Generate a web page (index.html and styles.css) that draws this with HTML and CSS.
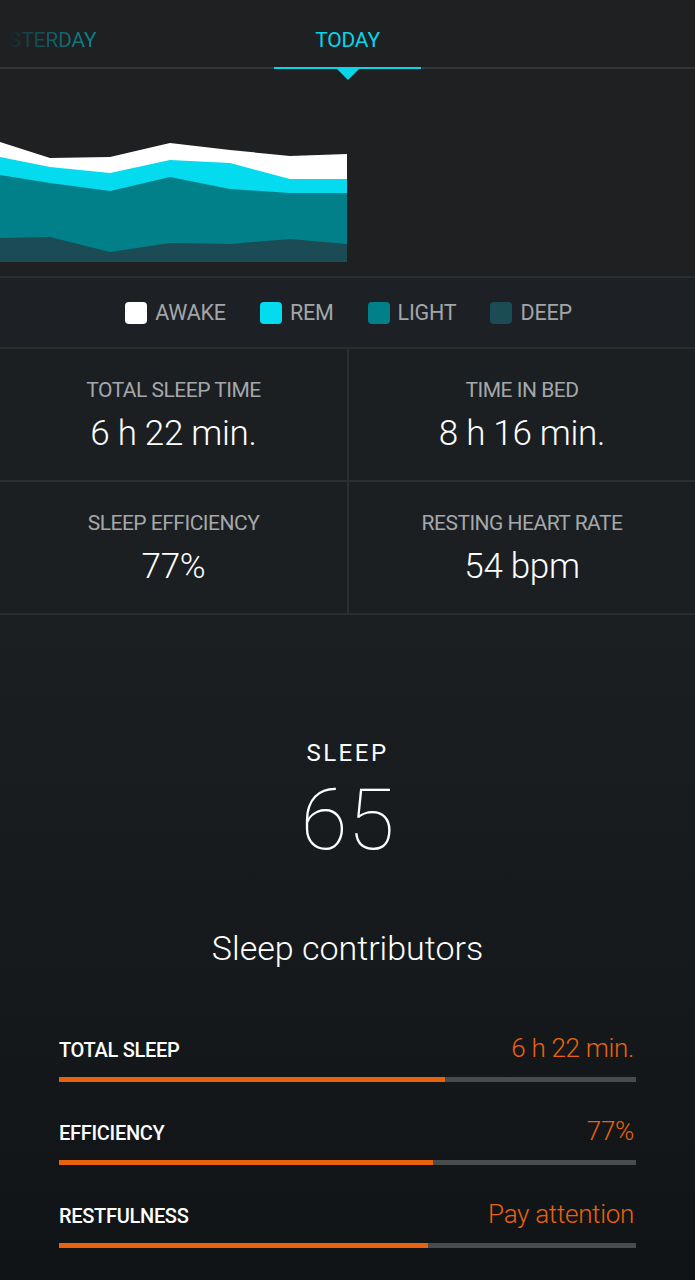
FILE: index.html
```html
<!DOCTYPE html>
<html>
<head>
<meta charset="utf-8">
<link rel="stylesheet" href="styles.css">
</head>
<body>
<div class="app">
  <header class="tabs">
    <div class="tab tab-prev">YESTERDAY</div>
    <div class="tab tab-active"><span class="tab-label">TODAY</span></div>
    <div class="tab"></div>
  </header>

  <section class="chart">
    <svg class="chart-svg" width="347" height="122" viewBox="0 0 347 122">
      <polygon fill="#ffffff" points="0,2 50,18 110,17 170,3 230,10 290,16 347,14 347,122 0,122"/>
      <polygon fill="#04dbef" points="0,17 50,27 110,33 170,20 230,23 290,39 347,39 347,122 0,122"/>
      <polygon fill="#02808a" points="0,35 50,43 110,51 170,37 230,49 290,53 347,53 347,122 0,122"/>
      <polygon fill="#1b4b55" points="0,98 50,97 110,112 170,103 230,104 290,99 347,104 347,122 0,122"/>
    </svg>
  </section>

  <section class="legend">
    <div class="legend-item"><span class="swatch swatch-awake"></span>AWAKE</div>
    <div class="legend-item"><span class="swatch swatch-rem"></span>REM</div>
    <div class="legend-item"><span class="swatch swatch-light"></span>LIGHT</div>
    <div class="legend-item"><span class="swatch swatch-deep"></span>DEEP</div>
  </section>

  <section class="stats">
    <div class="stat">
      <div class="stat-label">TOTAL SLEEP TIME</div>
      <div class="stat-value">6 h 22 min.</div>
    </div>
    <div class="stat">
      <div class="stat-label">TIME IN BED</div>
      <div class="stat-value">8 h 16 min.</div>
    </div>
    <div class="stat">
      <div class="stat-label">SLEEP EFFICIENCY</div>
      <div class="stat-value">77%</div>
    </div>
    <div class="stat">
      <div class="stat-label">RESTING HEART RATE</div>
      <div class="stat-value">54 bpm</div>
    </div>
  </section>

  <section class="score">
    <div class="score-title">SLEEP</div>
    <div class="score-value">65</div>
    <h2 class="contrib-title">Sleep contributors</h2>
    <div class="contribs">
      <div class="contrib">
        <div class="contrib-head"><span class="contrib-label">TOTAL SLEEP</span><span class="contrib-value">6 h 22 min.</span></div>
        <div class="bar"><div class="bar-fill" style="width:66.9%"></div></div>
      </div>
      <div class="contrib">
        <div class="contrib-head"><span class="contrib-label">EFFICIENCY</span><span class="contrib-value">77%</span></div>
        <div class="bar"><div class="bar-fill" style="width:64.9%"></div></div>
      </div>
      <div class="contrib">
        <div class="contrib-head"><span class="contrib-label">RESTFULNESS</span><span class="contrib-value">Pay attention</span></div>
        <div class="bar"><div class="bar-fill" style="width:64%"></div></div>
      </div>
    </div>
  </section>
</div>
</body>
</html>
```

FILE: styles.css
```css
* { box-sizing: border-box; }

html, body {
  margin: 0;
  padding: 0;
  background: #1f2022;
}

body {
  width: 695px;
  height: 1280px;
  overflow: hidden;
  font-family: Roboto, "Noto Sans", sans-serif;
  color: #ffffff;
}

.app {
  display: flex;
  flex-direction: column;
  height: 1280px;
}

/* Tabs */
.tabs {
  height: 69px;
  display: flex;
  justify-content: center;
  gap: 160px;
  border-bottom: 2px solid #343537;
  background: #1f2022;
  flex-shrink: 0;
}

.tab {
  width: 147px;
  flex-shrink: 0;
  text-align: center;
  font-size: 21px;
  line-height: 24px;
  padding-top: 28px;
  letter-spacing: -0.2px;
  position: relative;
  white-space: nowrap;
}

.tab-prev {
  color: #0e7f89;
  -webkit-mask-image: linear-gradient(to right, rgba(0,0,0,0) 28%, rgba(0,0,0,0.35) 40%, #000 80%);
  mask-image: linear-gradient(to right, rgba(0,0,0,0) 28%, rgba(0,0,0,0.35) 40%, #000 80%);
}

.tab-active {
  color: #07d6ea;
}

.tab-active::after {
  content: "";
  position: absolute;
  left: 0;
  right: 0;
  bottom: -2px;
  height: 2px;
  background: #07d6ea;
}

.tab-active::before {
  content: "";
  position: absolute;
  left: 50%;
  bottom: -13px;
  margin-left: -11px;
  border-left: 11px solid transparent;
  border-right: 11px solid transparent;
  border-top: 11px solid #07d6ea;
}

/* Chart */
.chart {
  height: 207px;
  flex-shrink: 0;
  padding-top: 71px;
  background: #1f2022;
}

.chart-svg {
  display: block;
}

/* Legend */
.legend {
  height: 73px;
  flex-shrink: 0;
  display: flex;
  align-items: center;
  justify-content: center;
  border-top: 2px solid #2c2d2f;
  border-bottom: 2px solid #2b2d2f;
  background: #1d2125;
  padding-left: 2px;
}

.legend-item {
  display: flex;
  align-items: center;
  font-size: 21.5px;
  color: #a3a6a9;
  letter-spacing: -0.2px;
  margin-right: 34px;
}

.legend-item:last-child { margin-right: 0; }

.swatch {
  width: 22px;
  height: 22px;
  border-radius: 4px;
  margin-right: 8px;
}

.swatch-awake { background: #ffffff; }
.swatch-rem { background: #04dbef; }
.swatch-light { background: #02808a; }
.swatch-deep { background: #1b4b55; }

/* Stats */
.stats {
  display: grid;
  grid-template-columns: 347px 1fr;
  grid-auto-rows: 131px;
  background: #2b2d2f;
  gap: 2px;
  border-bottom: 2px solid #2b2d2f;
  flex-shrink: 0;
}

.stat {
  background: #1b1f22;
  text-align: center;
  padding-top: 29px;
}

.stat-label {
  font-size: 21px;
  line-height: 24px;
  color: #a5a8ab;
  letter-spacing: -0.5px;
}

.stat-value {
  margin-top: 12px;
  font-size: 35px;
  line-height: 40px;
  font-weight: 300;
  letter-spacing: -0.3px;
}

/* Score */
.score {
  flex: 1;
  background: linear-gradient(to bottom, #1b1f22 0%, #111417 100%);
  padding-top: 124px;
  text-align: center;
}

.score-title {
  font-size: 24px;
  line-height: 28px;
  letter-spacing: 2.5px;
  font-weight: 400;
}

.score-value {
  margin-top: 10px;
  font-size: 86px;
  line-height: 86px;
  font-weight: 100;
}

.contrib-title {
  margin: 65px 0 0;
  font-size: 34px;
  line-height: 40px;
  font-weight: 300;
}

.contribs {
  margin-top: 65px;
  padding: 0 59px;
}

.contrib {
  margin-bottom: 34px;
}

.contrib-head {
  display: flex;
  justify-content: space-between;
  align-items: baseline;
  line-height: 30px;
  padding-right: 2px;
}

.contrib-label {
  font-size: 20px;
  font-weight: 500;
  letter-spacing: -0.3px;
}

.contrib-value {
  font-size: 26px;
  font-weight: 300;
  color: #e9620f;
  letter-spacing: -0.3px;
}

.bar {
  margin-top: 12px;
  height: 5px;
  background: #4a4b4d;
}

.bar-fill {
  height: 100%;
  background: #e9620f;
}
```
